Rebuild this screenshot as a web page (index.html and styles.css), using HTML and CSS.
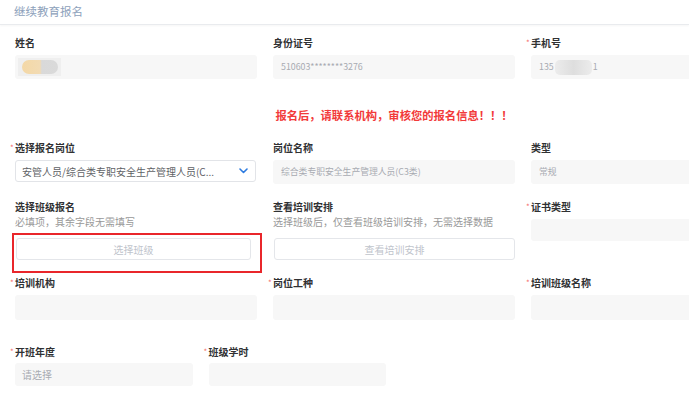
FILE: index.html
```html
<!DOCTYPE html>
<html lang="zh-CN">
<head>
<meta charset="utf-8">
<title>继续教育报名</title>
<link rel="stylesheet" href="styles.css">
</head>
<body>
<div class="page">
  <div class="header">继续教育报名</div>
  <div class="form">
    <div class="row cols3 r1">
      <div class="field">
        <div class="label">姓名</div>
        <div class="input"><span class="blur-name"><span class="blur-pill"></span></span></div>
      </div>
      <div class="field">
        <div class="label">身份证号</div>
        <div class="input">510603********3276</div>
      </div>
      <div class="field">
        <div class="label req">手机号</div>
        <div class="input">135<span class="blur-phone"></span>1</div>
      </div>
    </div>

    <div class="notice">报名后，请联系机构，审核您的报名信息！！！</div>

    <div class="row cols3 r2">
      <div class="field">
        <div class="label req">选择报名岗位</div>
        <div class="select">
          <span class="select-text">安管人员/综合类专职安全生产管理人员(C...</span>
          <svg class="chev" width="9" height="6" viewBox="0 0 9 6"><path d="M1 1 L4.5 4.5 L8 1" fill="none" stroke="#2d7be0" stroke-width="1.6" stroke-linecap="round" stroke-linejoin="round"/></svg>
        </div>
      </div>
      <div class="field">
        <div class="label">岗位名称</div>
        <div class="input">综合类专职安全生产管理人员(C3类)</div>
      </div>
      <div class="field">
        <div class="label">类型</div>
        <div class="input">常规</div>
      </div>
    </div>

    <div class="row cols3 r3">
      <div class="field">
        <div class="label">选择班级报名</div>
        <div class="desc">必填项，其余字段无需填写</div>
        <div class="btn btn-narrow">选择班级</div>
        <div class="mark"></div>
      </div>
      <div class="field">
        <div class="label">查看培训安排</div>
        <div class="desc">选择班级后，仅查看班级培训安排，无需选择数据</div>
        <div class="btn">查看培训安排</div>
      </div>
      <div class="field">
        <div class="label req">证书类型</div>
        <div class="input short"></div>
      </div>
    </div>

    <div class="row cols3 r4">
      <div class="field">
        <div class="label req">培训机构</div>
        <div class="input tall"></div>
      </div>
      <div class="field">
        <div class="label req">岗位工种</div>
        <div class="input tall"></div>
      </div>
      <div class="field">
        <div class="label req">培训班级名称</div>
        <div class="input tall"></div>
      </div>
    </div>

    <div class="row cols4 r5">
      <div class="field">
        <div class="label req">开班年度</div>
        <div class="input mid placeholder">请选择</div>
      </div>
      <div class="field">
        <div class="label req">班级学时</div>
        <div class="input mid"></div>
      </div>
    </div>
  </div>
</div>
</body>
</html>
```

FILE: styles.css
```css
html, body {
  margin: 0;
  padding: 0;
  background: #ffffff;
  overflow: hidden;
}

.page {
  width: 100%;
  overflow: hidden;
  font-family: "Noto Sans CJK SC", "Noto Sans", sans-serif;
}

.header {
  height: 24px;
  line-height: 23px;
  padding-left: 14px;
  font-size: 11.5px;
  color: #8da1bb;
  border-bottom: 1px solid #e9ebee;
  box-shadow: 0 1px 2px rgba(0, 0, 0, 0.04);
}

.form {
  width: 758px;
  padding-left: 15px;
}

.row {
  display: grid;
  column-gap: 16px;
  align-items: start;
}

.cols3 {
  grid-template-columns: repeat(3, 242px);
}

.cols4 {
  grid-template-columns: repeat(4, 177.5px);
}

.r1 { margin-top: 11px; }
.r2 { margin-top: 16px; }
.r3 { margin-top: 16px; }
.r4 { margin-top: 16px; }
.r5 { margin-top: 25px; }

.field {
  position: relative;
  display: flex;
  flex-direction: column;
}

.label {
  position: relative;
  height: 14px;
  line-height: 14px;
  font-size: 10px;
  font-weight: 700;
  color: #303133;
  margin-bottom: 5px;
}

.req::before {
  content: "*";
  position: absolute;
  left: -5px;
  top: 0;
  font-size: 8px;
  font-weight: 400;
  color: #f56c6c;
}

.input {
  height: 24px;
  line-height: 24px;
  box-sizing: border-box;
  padding: 0 8px;
  background: #f7f7f7;
  border-radius: 3px;
  font-size: 8.8px;
  color: #a8abb2;
  display: flex;
  align-items: center;
  white-space: nowrap;
}

.input.tall { height: 25px; }
.input.short { height: 22px; }
.input.mid { height: 23px; margin-top: -1px; }

.placeholder {
  font-size: 10px;
  padding-left: 7px;
}

.blur-name {
  display: inline-flex;
  align-items: center;
  justify-content: center;
  width: 43px;
  height: 18px;
  margin-left: -5px;
  background: #efefef;
}

.blur-pill {
  display: block;
  width: 36px;
  height: 14px;
  border-radius: 7px;
  background: linear-gradient(90deg, #f4d8a6 0%, #f2dbb3 50%, #d9d9d9 55%, #dadada 100%);
}

.blur-phone {
  display: inline-block;
  width: 37px;
  height: 15px;
  margin: 0 1px 0 1px;
  border-radius: 5px;
  background: linear-gradient(90deg, #ececec, #dedede 50%, #ececec);
}

.notice {
  margin-top: 26px;
  height: 20px;
  line-height: 20px;
  text-align: center;
  font-size: 11.3px;
  font-weight: 700;
  color: #f23a3a;
}

.select {
  height: 22px;
  box-sizing: border-box;
  border: 1px solid #e2e4e8;
  border-radius: 3px;
  background: #ffffff;
  padding: 0 7px 0 6px;
  display: flex;
  align-items: center;
  justify-content: space-between;
  gap: 12px;
  margin-right: 1px;
}

.select-text {
  font-size: 10px;
  color: #606266;
  white-space: nowrap;
}

.chev {
  flex: none;
}

.desc {
  height: 14px;
  line-height: 14px;
  font-size: 10px;
  color: #999999;
  margin-top: -4px;
  margin-bottom: 9px;
}

.btn {
  height: 22px;
  box-sizing: border-box;
  border: 1px solid #e4e6ea;
  border-radius: 3px;
  background: #ffffff;
  display: flex;
  align-items: center;
  justify-content: center;
  font-size: 10px;
  color: #c0c4cc;
  margin-left: 1px;
}

.btn-narrow {
  margin-right: 6px;
}

.mark {
  position: absolute;
  left: -3px;
  top: 33px;
  width: 250px;
  height: 40px;
  box-sizing: border-box;
  border: 2px solid #e9262b;
  pointer-events: none;
}
```
